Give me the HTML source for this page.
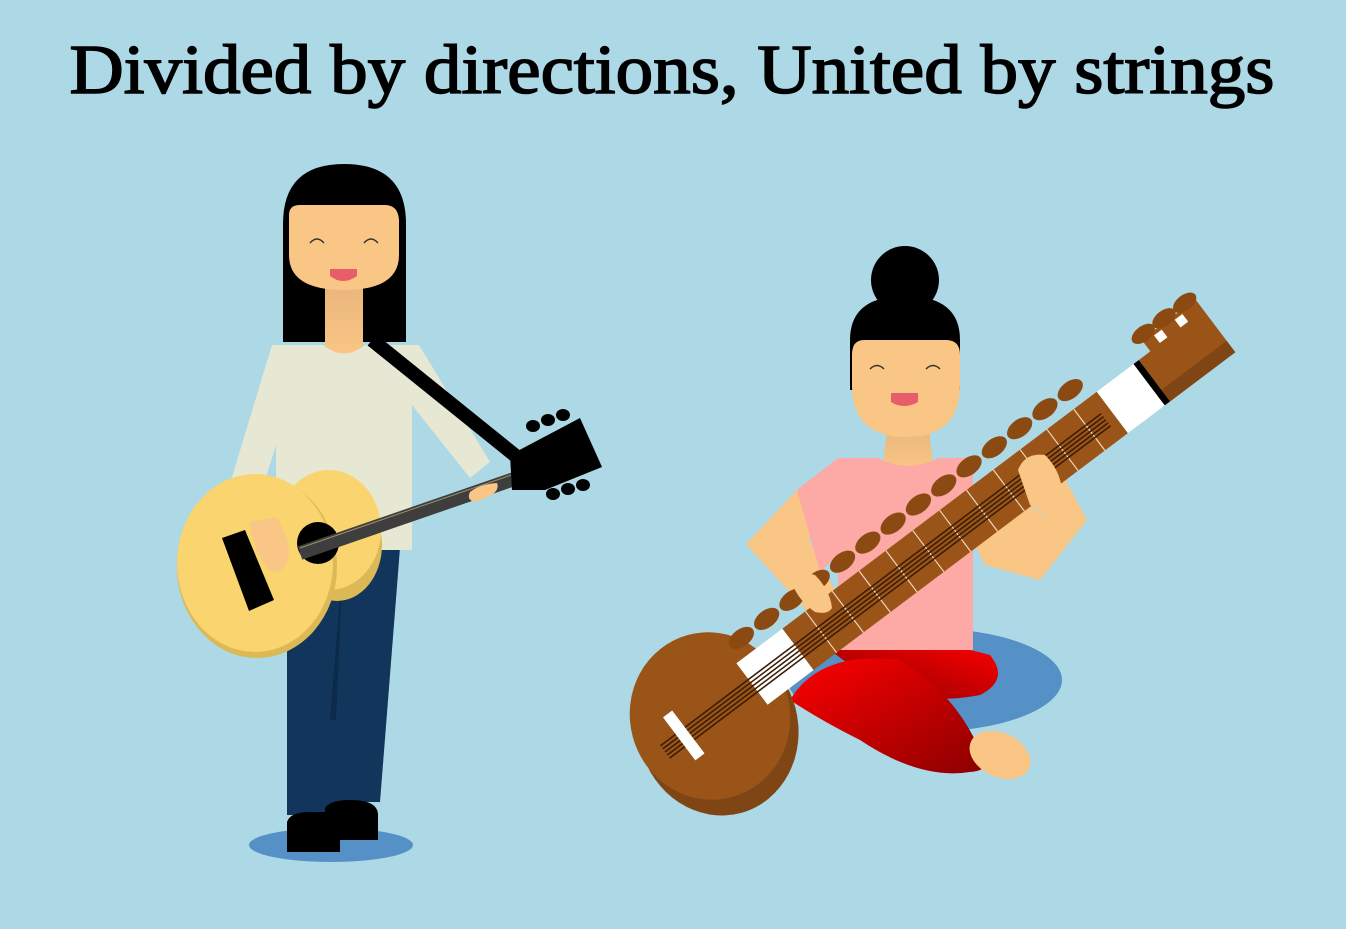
<!DOCTYPE html>
<html><head><meta charset="utf-8"><style>
html,body{margin:0;padding:0;background:#add8e6;width:1346px;height:929px;overflow:hidden}
svg{display:block}
</style></head><body>
<svg width="1346" height="929" viewBox="0 0 1346 929" xmlns="http://www.w3.org/2000/svg">
<defs>
<linearGradient id="neckg" x1="0" y1="0" x2="0" y2="1"><stop offset="0" stop-color="#e8b47c"/><stop offset="1" stop-color="#f9c686"/></linearGradient>
<linearGradient id="red1" x1="0" y1="0" x2="1" y2="1"><stop offset="0" stop-color="#ff0000"/><stop offset="1" stop-color="#8b0000"/></linearGradient>
<linearGradient id="red2" x1="1" y1="0" x2="0" y2="1"><stop offset="0" stop-color="#ff0000"/><stop offset="1" stop-color="#8b0000"/></linearGradient>
</defs>
<rect width="1346" height="929" fill="#add8e6"/>
<text x="672" y="93" text-anchor="middle" font-family="Liberation Serif, serif" font-size="70" stroke="#000" stroke-width="1.6" textLength="1205" lengthAdjust="spacingAndGlyphs" fill="#000">Divided by directions, United by strings</text>

<!-- Guitarist -->
<ellipse cx="331" cy="845" rx="82" ry="17" fill="#5591c7"/>
<path d="M283,342 L283,224 Q283,164 344,164 Q406,164 406,224 L406,342 Z" fill="#000"/>
<polygon points="287,548 400,548 380,802 340,802 336,815 287,815" fill="#12355b"/>
<polygon points="343,560 336,720 330,720" fill="#0c2a4a"/>
<path d="M287,852 L287,822 Q290,812 310,812 L340,812 L340,852 Z" fill="#000"/>
<path d="M325,840 L325,808 Q330,800 350,800 Q378,800 378,815 L378,840 Z" fill="#000"/>
<rect x="325" y="280" width="38" height="75" fill="url(#neckg)"/>
<path d="M272,345 L323,345 Q344,362 365,345 L419,345 L490,462 L470,478 L412,405 L412,550 L276,550 L276,445 L252,522 L225,500 Z" fill="#e6e8d4"/>
<path d="M289,215 Q289,205 300,205 L385,205 Q398,205 399,220 L399,255 Q399,290 344,290 Q289,290 289,255 Z" fill="#f9c686"/>
<path d="M310,243 Q317,235 324,243" stroke="#333" stroke-width="1.5" fill="none"/>
<path d="M364,243 Q371,235 378,243" stroke="#333" stroke-width="1.5" fill="none"/>
<path d="M330,269 L357,269 L357,276 Q343,286 330,276 Z" fill="#e85d6a"/>
<line x1="372" y1="340" x2="517" y2="457" stroke="#000" stroke-width="14"/>
<!-- guitar -->
<ellipse cx="337" cy="545" rx="45" ry="56" fill="#dbb956"/>
<ellipse cx="329" cy="530" rx="52" ry="60" fill="#f9d46f"/>
<ellipse cx="257" cy="567" rx="80" ry="91" fill="#dbb956"/>
<ellipse cx="255" cy="563" rx="78" ry="89" fill="#f9d46f"/>
<polygon points="222,538 245,530 274,600 249,611" fill="#000"/>
<circle cx="318" cy="543" r="21" fill="#000"/>
<line x1="300" y1="553" x2="520" y2="477" stroke="#3e3e3e" stroke-width="14"/>
<line x1="300" y1="548" x2="520" y2="472" stroke="#fbe08e" stroke-width="1" opacity="0.5"/>
<polygon points="510,455 580,418 602,467 545,490 512,490" fill="#000"/>
<g fill="#000"><ellipse cx="533" cy="426" rx="7" ry="6"/><ellipse cx="548" cy="420" rx="7" ry="6"/><ellipse cx="563" cy="415" rx="7" ry="6"/><ellipse cx="553" cy="494" rx="7" ry="6"/><ellipse cx="568" cy="489" rx="7" ry="6"/><ellipse cx="583" cy="485" rx="7" ry="6"/></g>
<path d="M250,522 L276,517 Q292,540 288,560 Q283,576 268,570 Q252,548 250,522 Z" fill="#f9c686"/>
<path d="M470,492 Q480,484 497,483 Q500,490 490,496 L475,502 Q466,500 470,492 Z" fill="#f9c686"/>

<!-- Sitar player -->
<ellipse cx="925" cy="680" rx="137" ry="52" fill="#5591c7"/>
<circle cx="905" cy="280" r="34" fill="#000"/>
<path d="M850,390 L850,340 Q850,296 905,296 Q960,296 960,340 L960,390 Z" fill="#000"/>
<path d="M830,650 Q900,630 990,655 Q1010,680 980,695 Q930,705 880,688 Z" fill="url(#red2)"/>
<path d="M790,700 Q820,650 900,660 Q950,690 975,740 Q1000,770 970,772 Q920,780 860,740 Q820,720 790,700 Z" fill="url(#red1)"/>
<ellipse cx="1000" cy="755" rx="32" ry="22" transform="rotate(25 1000 755)" fill="#f9c686"/>
<path d="M888,420 L928,420 L933,465 Q908,478 883,465 Z" fill="url(#neckg)"/>
<polygon points="797,490 822,520 809,540 840,600 830,615 806,610 746,544" fill="#f9c686"/>
<polygon points="973,540 985,565 1040,580 1087,520 1060,470 1035,450 1050,518 1010,495" fill="#f9c686"/>
<path d="M838,458 L878,458 Q908,474 938,458 L973,458 L973,650 L838,650 L838,555 L820,572 L797,490 Z" fill="#fda9a6"/>
<path d="M852,355 Q852,340 864,340 L946,340 Q960,340 960,355 L960,385 Q960,437 906,437 Q852,437 852,385 Z" fill="#f9c686"/>
<path d="M870,369 Q877,362 884,369" stroke="#333" stroke-width="1.5" fill="none"/>
<path d="M926,369 Q933,362 940,369" stroke="#333" stroke-width="1.5" fill="none"/>
<path d="M891,393 L918,393 L918,402 Q904,410 891,402 Z" fill="#e85d6a"/>
<!-- sitar -->
<ellipse cx="718" cy="728" rx="80" ry="88" transform="rotate(-15 718 728)" fill="#7f4514"/>
<ellipse cx="710" cy="716" rx="80" ry="84" transform="rotate(-15 710 716)" fill="#9a5418"/>
<g transform="translate(752,684) rotate(-37) scale(0.96)">
 <rect x="0" y="-27" width="60" height="54" fill="#fff"/>
 <rect x="60" y="-27" width="410" height="54" fill="#9a5418"/>
 <rect x="470" y="-27" width="48" height="54" fill="#fff"/>
 <rect x="518" y="-27" width="7" height="54" fill="#000"/>
 <polygon points="525,-27 610,-27 610,27 525,27" fill="#9a5418"/>
 <polygon points="525,12 610,12 610,27 525,27" fill="#7f4514"/>
 <rect x="540" y="-42" width="70" height="16" fill="#9a5418"/>
 <rect x="553" y="-38" width="10" height="10" fill="#fff"/>
 <rect x="580" y="-38" width="10" height="10" fill="#fff"/>
 <g fill="#8b4a12"><ellipse cx="545" cy="-46" rx="14" ry="8"/><ellipse cx="572" cy="-46" rx="14" ry="8"/><ellipse cx="599" cy="-46" rx="14" ry="8"/></g>
 <g stroke="#f1d9c0" stroke-width="1.2">
  <line x1="90" y1="-27" x2="90" y2="27"/><line x1="125" y1="-27" x2="125" y2="27"/><line x1="160" y1="-27" x2="160" y2="27"/><line x1="195" y1="-27" x2="195" y2="27"/><line x1="230" y1="-27" x2="230" y2="27"/><line x1="265" y1="-27" x2="265" y2="27"/><line x1="300" y1="-27" x2="300" y2="27"/><line x1="335" y1="-27" x2="335" y2="27"/><line x1="370" y1="-27" x2="370" y2="27"/><line x1="405" y1="-27" x2="405" y2="27"/><line x1="440" y1="-27" x2="440" y2="27"/>
 </g>
 <g stroke="#3a1c05" stroke-width="1.6">
  <line x1="-115" y1="-6" x2="460" y2="-6"/><line x1="-115" y1="-2" x2="460" y2="-2"/><line x1="-115" y1="2" x2="460" y2="2"/><line x1="-115" y1="6" x2="460" y2="6"/><line x1="-115" y1="10" x2="460" y2="10"/>
 </g>
 <rect x="-95" y="-28" width="12" height="56" fill="#fff"/>
 <g fill="#8b4a12">
  <ellipse cx="20" cy="-45" rx="15" ry="9"/><ellipse cx="53" cy="-45" rx="15" ry="9"/><ellipse cx="86" cy="-45" rx="15" ry="9"/><ellipse cx="119" cy="-45" rx="15" ry="9"/><ellipse cx="152" cy="-45" rx="15" ry="9"/><ellipse cx="185" cy="-45" rx="15" ry="9"/><ellipse cx="218" cy="-45" rx="15" ry="9"/><ellipse cx="251" cy="-45" rx="15" ry="9"/><ellipse cx="284" cy="-45" rx="15" ry="9"/><ellipse cx="317" cy="-45" rx="15" ry="9"/><ellipse cx="350" cy="-45" rx="15" ry="9"/><ellipse cx="383" cy="-45" rx="15" ry="9"/><ellipse cx="416" cy="-45" rx="15" ry="9"/><ellipse cx="449" cy="-45" rx="15" ry="9"/>
 </g>
</g>
<path d="M792,583 Q800,570 815,575 Q830,590 832,608 Q828,615 815,612 Q798,600 792,583 Z" fill="#f9c686"/>
<path d="M1018,470 Q1025,452 1045,455 Q1060,470 1062,490 L1050,518 L1030,505 Z" fill="#f9c686"/>
</svg>
</body></html>
